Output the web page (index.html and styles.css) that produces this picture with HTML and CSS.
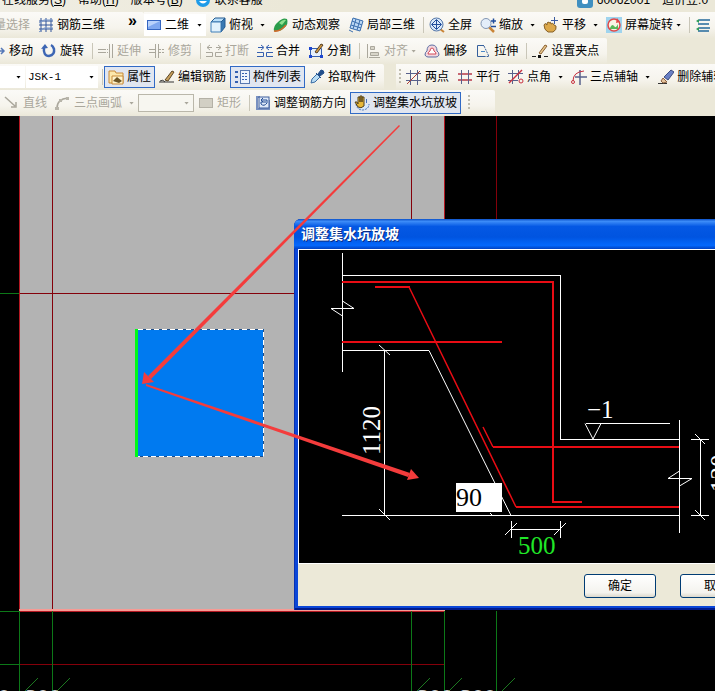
FILE: index.html
```
<!DOCTYPE html>
<html lang="zh-CN">
<head>
  <meta charset="UTF-8">
  <meta name="viewport" content="width=device-width, initial-scale=1.0">
  <title>调整集水坑放坡</title>
  <link rel="stylesheet" href="styles.css">
</head>
<body>

  <!-- Menu -->
  <nav class="menu">
    <a href="#">在线服务(<u>S</u>)</a>
    <a href="#">帮助(<u>H</u>)</a>
    <a href="#">版本号(<u>B</u>)</a>
    <a href="#" class="contact">
      <svg class="icon" viewBox="0 0 16 16"><circle cx="8" cy="8" r="7" fill="#1e9be8"/><path d="M4 9q4 5 8 0" fill="#fff"/></svg>
      联系客服
    </a>
    <a href="#" class="account">
      <svg class="icon" viewBox="0 0 16 16"><rect width="16" height="16" rx="3" fill="#3f8fc0"/><rect x="5" y="7" width="6" height="5" rx="2" fill="#fff"/></svg>
      60062001
    </a>
    <a href="#" class="coins">造价豆:0</a>
  </nav>

  <!-- View toolbar -->
  <div class="row">
    <div class="bar bar-select">
      <button class="tool off"><svg class="icon" viewBox="0 0 16 16"></svg>批量选择</button>
      <button class="tool"><svg class="icon" viewBox="0 0 16 16"><path d="M1 4h14M1 8h14M1 12h14M3 1v14M8 1v14M13 1v14" stroke="#31549a" fill="none"/><path d="M1 6l5-3h9M1 15l5-4h9" stroke="#7494c8" fill="none"/></svg>钢筋三维</button>
      <button class="more" aria-label="更多">»</button>
    </div>
    <div class="bar">
      <label class="combo combo-view">
        <svg class="icon" viewBox="0 0 16 16"><rect x="1.500" y="3.500" width="13" height="9" fill="#7fa8f0" stroke="#3465c0"/><path d="M2 4h12l-12 6z" fill="#b9d2fb"/></svg>
        <select aria-label="视图"><option>二维</option></select><i class="arrow"></i>
      </label>
      <button class="tool"><svg class="icon" viewBox="0 0 16 16"><path d="M1 5l4-4h10l-4 4z" fill="#b8defa" stroke="#245b90"/><path d="M11 5l4-4v9l-4 5z" fill="#3979b3" stroke="#245b90"/><path d="M1 5h10v10H1z" fill="#e1f1fc" stroke="#3f7fb8"/></svg>俯视<i class="arrow"></i></button>
      <button class="tool"><svg class="icon" viewBox="0 0 16 16"><path d="M1 14q-1-5 4-9 5-5 9-3 2 5-3 9-4 4-10 3z" fill="#2a9c4a"/><path d="M6 6q4-4 7-3l-4 5z" fill="#8fe08f"/><path d="M1 14q6 1 12-6" stroke="#d26a2c" fill="none" stroke-width="1.500"/></svg>动态观察</button>
      <button class="tool"><svg class="icon" viewBox="0 0 16 16"><path d="M5 1l10 3-3 10-10-3z" fill="#bcd8f4" stroke="#3c6fae"/><path d="M8 2L5 12M12 3L9 13M4 4l10 4M3 8l10 3M1 13l4 2" stroke="#3c6fae" fill="none"/></svg>局部三维</button>
      <span class="sep"></span>
      <button class="tool"><svg class="icon" viewBox="0 0 16 16"><path d="M11 12l4 3" stroke="#c98436" stroke-width="2"/><circle cx="7.500" cy="7.500" r="6.500" fill="#d8e8fa" stroke="#5577a8"/><path d="M3 7.500h9M7.500 3v9M5 5l2.500-2.500L10 5M5 10l2.500 2.500L10 10M5 5L2.500 7.500 5 10M10 5l2.500 2.500L10 10" stroke="#204d9c" fill="none"/></svg>全屏</button>
      <button class="tool"><svg class="icon" viewBox="0 0 16 16"><path d="M9 10l5 5" stroke="#c98436" stroke-width="2.500"/><circle cx="6" cy="6.500" r="5" fill="#e4eefa" stroke="#8296b4"/><path d="M11 4h5M13.500 1.500v5M11 9.500h5" stroke="#204d9c" stroke-width="1.500"/></svg>缩放<i class="arrow"></i></button>
      <button class="tool"><svg class="icon" viewBox="0 0 16 16"><path d="M1 8q1-3 3 0V6q2-2 2 0 2-2 2 1 2-2 3 1l2 1q1 4-3 6H5q-4-2-4-7z" fill="#dca84a" stroke="#87622a"/><path d="M8 3.500h7M11.500 0v7" stroke="#3b5ba0"/></svg>平移<i class="arrow"></i></button>
      <button class="tool"><svg class="icon" viewBox="0 0 16 16"><rect width="16" height="16" fill="#9fd4ee"/><circle cx="8" cy="8" r="6" fill="#f8f4e4" stroke="#e04848" stroke-width="1.500"/><path d="M4 11q2-5 4-2t4-2v5H4z" fill="#58b858"/><path d="M11 1l3 4-4 1z" fill="#e04848"/></svg>屏幕旋转<i class="arrow tight"></i></button>
      <span class="sep"></span>
      <button class="tool"><svg class="icon" viewBox="0 0 16 16"><path d="M4 3h11M3 7h11M4 11h11M3 14h11" stroke="#256a9c" stroke-width="1.500"/><path d="M1 4l3-2v4zM1 12l3-2v4z" fill="#2e9c58"/></svg></button>
    </div>
  </div>

  <!-- Edit toolbar -->
  <div class="row">
    <div class="bar bar-edit">
      <button class="tool"><svg class="icon" viewBox="0 0 16 16"><path d="M3 8h11M11 5l3 3-3 3" stroke="#5578b8" stroke-width="1.500" fill="none"/></svg>移动</button>
      <button class="tool"><svg class="icon" viewBox="0 0 16 16"><path d="M3 4q-1 9 5 9 6-1 5-7-1-3-3-4" stroke="#3d66b4" stroke-width="2.500" fill="none"/><path d="M0 6l4-5 3 4z" fill="#3d66b4"/></svg>旋转</button>
      <span class="sep"></span>
      <button class="tool off"><svg class="icon" viewBox="0 0 16 16"><path d="M0 6.500h7M0 9.500h7M11.500 1v14M14.500 1v14" stroke="#aaa79c"/><path d="M7 6.500h4M7 9.500h4" stroke="#aaa79c" stroke-dasharray="1 1"/></svg>延伸</button>
      <button class="tool off"><svg class="icon" viewBox="0 0 16 16"><path d="M0 6.500h6M0 9.500h6M6.500 1v14M9.500 1v14" stroke="#aaa79c"/><path d="M10 6.500h6M10 9.500h6" stroke="#aaa79c" stroke-dasharray="2 1"/></svg>修剪</button>
      <span class="sep"></span>
      <button class="tool off"><svg class="icon" viewBox="0 0 16 16"><path d="M1 4.500h5M4 2L1 4.500 4 7M10 4.500h5M12 2l3 2.500L12 7M0 9.500h6.500v4H0M16 9.500H9.500v4H16" stroke="#aaa79c" fill="none"/></svg>打断</button>
      <button class="tool"><svg class="icon" viewBox="0 0 16 16"><path d="M1 4.500h5M4 2l3 2.500L4 7M15 4.500h-5M12 2L9 4.500 12 7M0 9.500h6.500v4H0M16 9.500H9.500v4H16" stroke="#345fb0" fill="none"/></svg>合并</button>
      <button class="tool"><svg class="icon" viewBox="0 0 16 16"><path d="M2.500 5.500h11v8h-11z" fill="#e6effb" stroke="#345fb0"/><path d="M1 4h3v3H1zM1 12h3v3H1zM12 12h3v3h-3z" fill="#1d46d0"/><path d="M7 9l6-8 2 1-6 8z" fill="#d69b40" stroke="#503c24"/></svg>分割</button>
      <span class="sep"></span>
      <button class="tool off"><svg class="icon" viewBox="0 0 16 16"><path d="M2.500 1v14M4 14.500h11" stroke="#aaa79c"/><path d="M5.500 3.500h4v3h-4zM5.500 9.500h8v3h-8z" fill="#d8d5c9" stroke="#aaa79c"/></svg>对齐<i class="arrow tight"></i></button>
      <button class="tool"><svg class="icon" viewBox="0 0 16 16"><path d="M1 12q0-3 2-4 0-6 5-6t5 6q2 1 2 4-1 2-3 2H4q-2 0-3-2z" fill="#f3d6dc" stroke="#5c6fa4"/><path d="M4 11q0-2 2-3 0-3 2-3t2 3q2 1 2 3z" fill="#fff" stroke="#d24858"/></svg>偏移</button>
      <button class="tool"><svg class="icon" viewBox="0 0 16 16"><path d="M9 2.500H2.500v11H9" stroke="#345f9c" fill="none"/><path d="M9 3l5 10.500H8" stroke="#345f9c" stroke-dasharray="2 1" fill="none"/><path d="M6 8.500h4" stroke="#4a88c8"/></svg>拉伸</button>
      <span class="sep"></span>
      <button class="tool"><svg class="icon" viewBox="0 0 16 16"><path d="M0 13.500h4M12 13.500h4" stroke="#222"/><path d="M6 12h3v3H6z" fill="#111"/><path d="M7 10l6-8 2 1-6 8z" fill="#e8c68c" stroke="#8a6030"/></svg>设置夹点</button>
    </div>
  </div>

  <!-- Component toolbar -->
  <div class="row">
    <div class="bar">
      <label class="combo combo-type"><select aria-label="构件类型"><option></option></select><i class="arrow"></i></label>
      <label class="combo combo-name"><select aria-label="构件"><option>JSK-1</option></select><i class="arrow"></i></label>
      <span class="sep"></span>
      <button class="tool on"><svg class="icon" viewBox="0 0 16 16"><path d="M1 2h6l1 2h7v10H1z" fill="#fce8ac" stroke="#c88a38"/><path d="M4 7h11v8H4z" fill="#fff4cc" stroke="#c88a38"/><path d="M5 12l4-4 5 4-3 2z" fill="#6c5424"/></svg>属性</button>
      <button class="tool"><svg class="icon" viewBox="0 0 16 16"><path d="M0 13h15M1 12q3-2 5 1" stroke="#333" fill="none"/><path d="M6 11l7-9 2 1-6 9z" fill="#c8a05c" stroke="#5c4828"/></svg>编辑钢筋</button>
      <button class="tool on"><svg class="icon" viewBox="0 0 16 16"><path d="M1 3h3M1 8h3M1 13h3" stroke="#345fb0" stroke-width="2"/><rect x="6.500" y="1.500" width="9" height="13" fill="#edf3fc" stroke="#5878b0"/><path d="M8 4.500h6M8 7.500h6M8 10.500h6" stroke="#345fb0" stroke-dasharray="2 1"/></svg>构件列表</button>
      <button class="tool"><svg class="icon" viewBox="0 0 16 16"><path d="M2 14l1-4 5-5 3 3-5 5z" fill="#b8dcf4" stroke="#3a6ca4"/><path d="M7 4l5 5M9 5l3-4q3 0 3 3l-4 3z" fill="#234f8c" stroke="#234f8c"/></svg>拾取构件</button>
    </div>
    <div class="bar bar-axis">
      <span class="grip"></span>
      <button class="tool"><svg class="icon" viewBox="0 0 16 16"><path d="M0 4.500h15M0 11.500h15M4.500 1v15M11.500 1v15" stroke="#58618c"/><path d="M1 15L14 2" stroke="#b04038"/></svg>两点</button>
      <button class="tool"><svg class="icon" viewBox="0 0 16 16"><path d="M1 5h14M1 11h14" stroke="#b83848" stroke-width="1.500"/><path d="M4.500 1v14M11.500 1v14" stroke="#58618c"/></svg>平行</button>
      <button class="tool"><svg class="icon" viewBox="0 0 16 16"><path d="M0 4.500h15M0 11.500h10M4.500 1v14M10.500 1v9" stroke="#58618c"/><path d="M1 14L14 1" stroke="#c83040" stroke-width="1.500"/><circle cx="13" cy="12" r="2" fill="none" stroke="#c83040"/></svg>点角<i class="arrow"></i></button>
      <button class="tool"><svg class="icon" viewBox="0 0 16 16"><path d="M4 8h12M9 1v15" stroke="#58618c" stroke-width="1.500"/><path d="M2 12q0-9 11-10" stroke="#c83040" fill="none"/><circle cx="2" cy="13" r="1.500" fill="none" stroke="#c83040"/></svg>三点辅轴<i class="arrow"></i></button>
      <button class="tool"><svg class="icon" viewBox="0 0 16 16"><path d="M0 14.500h9" stroke="#333"/><path d="M5 9l4 4-4 1-2-2z" fill="#e5c49c" stroke="#8c6040"/><path d="M6 8l7-7 3 2-6 8z" fill="#6a80c4" stroke="#3c4c80"/></svg>删除辅轴</button>
    </div>
  </div>

  <!-- Draw toolbar -->
  <div class="row">
    <div class="bar">
      <button class="tool off"><svg class="icon" viewBox="0 0 16 16"><path d="M1 2l10 9M12 7v5H7" stroke="#aaa79c" stroke-width="1.500" fill="none"/></svg>直线</button>
      <button class="tool off"><svg class="icon" viewBox="0 0 16 16"><path d="M2 13q0-9 11-10" stroke="#aaa79c" stroke-width="1.500" fill="none"/><path d="M0 12h4v3H0zM4 4h3v3H4zM11 2h3v3h-3z" fill="#b8b5aa"/></svg>三点画弧<i class="arrow"></i></button>
      <label class="combo combo-arc"><select aria-label="画弧方式" disabled><option></option></select><i class="arrow"></i></label>
      <button class="tool off"><svg class="icon" viewBox="0 0 16 16"><rect x="1.500" y="3.500" width="13" height="9" fill="#d2cfc4" stroke="#b4b1a6"/></svg>矩形</button>
      <span class="sep"></span>
      <button class="tool"><svg class="icon" viewBox="0 0 16 16"><path d="M1 1h4v2H3v10h10V5h2v10H1z" fill="#7890c0"/><rect x="4" y="2" width="10" height="11" fill="#dfe9f8" stroke="#3c5c9c"/><path d="M6 5h6v3q-3 4-6 1V7h5M8 3L6 5l2 2" stroke="#234c94" fill="none"/></svg>调整钢筋方向</button>
      <button class="tool on"><svg class="icon" viewBox="0 0 16 16"><path d="M2 9q1 6 7 6 6-1 6-6" fill="#d8e8fa" stroke="#4470b8" stroke-dasharray="2 1"/><path d="M1 7h2l1 2V2h2v5-6h2v6-5h2v9q-3 3-6 1z" fill="#e8b838" stroke="#54421c"/><path d="M12.500 4v4" stroke="#4470b8"/></svg>调整集水坑放坡</button>
    </div>
    <div class="bar bar-empty"><span class="grip"></span></div>
  </div>

  <!-- Drawing area -->
  <main class="canvas">
    <svg class="plan" width="1200" height="1000" viewBox="0 116 1200 1000">
      <rect x="19" y="116" width="426" height="494" fill="#b3b3b3"/>
      <g shape-rendering="crispEdges" fill="none">
        <path d="M52.500 116V610M411.500 116V610M496.500 116V610M19 293.500H445M19 664.500H445" stroke="#84000a"/>
        <path d="M19.500 116V610M444.500 116V610" stroke="#b41822"/>
        <path d="M19 610H445" stroke="#f89a94" stroke-width="2"/>
        <path d="M19 611.500H445" stroke="#b41822"/>
        <path d="M0 293.500H19M0 611.500H19M0 664.500H19M19.500 611V1100M52.500 611V1100M411.500 611V1100M444.500 611V1100M496.500 611V1100" stroke="#0c7818"/>
      </g>
      <path d="M24 692L38 678M56 692L70 678M416 692L430 678M448 692L462 678M501 692L515 678" stroke="#1c7820"/>
      <g class="axis-text">
        <text x="-2" y="705">0</text>
        <text x="25" y="705">300</text>
        <text x="417" y="705">300</text>
        <text x="460" y="705">300</text>
      </g>
      <!-- Selected pit -->
      <rect x="136" y="329" width="128" height="128" fill="#007af0"/>
      <path d="M138 329.500H263.500V456.500H138" fill="none" stroke="#1c4c88"/>
      <path d="M138 329.500H263.500V456.500H138" fill="none" stroke="#fff" stroke-dasharray="5 3"/>
      <rect x="135" y="329" width="3" height="128" fill="#00f818"/>
    </svg>

    <!-- Slope dialog -->
    <form class="dialog">
      <h2 class="dialog-title">调整集水坑放坡</h2>
      <div class="section">
        <svg class="section-svg" width="471" height="313" viewBox="299 250 471 313">
          <g fill="none" stroke="#fff" shape-rendering="crispEdges">
            <path d="M342.500 253V372M342 275.500H560.500V439.500H679M342 350.500H429M342 515.500H679M384.500 350V515M679.500 420V533M586 423.500H670M691 439.500H709M691 515.500H709M700.500 439V515M511.500 521V538M560.500 521V538M511 529.500H560"/>
          </g>
          <g fill="none" stroke="#fff">
            <path d="M429 350.500L511 515.500M342.500 301L354 308.500H331L342.500 316M679.500 471L668 478.500H692L679.500 486M379 345L390 355M379 509L390 520M585 423.500L593 439L601 423.500M695 434L705 444M695 510L705 520M505 535L517 523M554 535L566 523M490 513l2 2"/>
          </g>
          <g fill="none" stroke="#e80c14" stroke-width="2" shape-rendering="crispEdges">
            <path d="M342 282H553V502M342 342H502"/>
            <path d="M375 287H410M493 447H679M516 507H679M552 502H582"/>
          </g>
          <path d="M409 287L516 507M483 427L493 447" fill="none" stroke="#e80c14" stroke-width="1.500"/>
          <g class="dim-text">
            <text transform="translate(380 455) rotate(-90)">1120</text>
            <text x="587" y="418">−1</text>
            <text class="dim-edit" x="518" y="554">500</text>
            <text transform="translate(728 492) rotate(-90)">120</text>
          </g>
        </svg>
        <input class="angle" type="text" value="90" aria-label="放坡角度">
      </div>
      <div class="dialog-buttons">
        <button type="button">确定</button>
        <button type="button">取消</button>
      </div>
    </form>

    <!-- Pointer arrows over the plan and the dialog -->
    <svg class="pointers" width="1200" height="1000" viewBox="0 116 1200 1000">
      <g fill="#f43c3c">
        <path d="M399 125L400 126L151 379L148 376Z"/>
        <path d="M142 384L144 372L154 382Z"/>
        <path d="M146 384L146 386L408 477L410 473Z"/>
        <path d="M419 478L407 480L411 469Z"/>
      </g>
    </svg>
  </main>

</body>
</html>
```
FILE: styles.css
```
* {
  box-sizing: border-box;
}
body {
  display: flex;
  flex-direction: column;
  height: 100vh;
  margin: 0;
  overflow: hidden;
  background: #ebe8d8;
  color: #000;
  font: 12px/16px "Liberation Sans", "Noto Sans CJK SC", sans-serif;
}
button, select, input {
  margin: 0;
  padding: 0;
  border: none;
  background: none;
  color: inherit;
  font: inherit;
}
.icon {
  flex: none;
  width: 16px;
  height: 16px;
}

/* Menu */
.menu {
  display: flex;
  flex: none;
  align-items: flex-end;
  gap: 12px;
  height: 12px;
  padding: 0 0 4px 2px;
  overflow: hidden;
  background: linear-gradient(90deg, #f0eee4, #ebe8d8 40%);
  white-space: nowrap;
}
.menu a {
  display: flex;
  flex: none;
  color: #000;
  text-decoration: none;
}
.contact {
  gap: 4px;
}
.account {
  gap: 4px;
  margin-left: 302px;
}

/* Toolbars */
.row {
  display: flex;
  flex: none;
  height: 26px;
  overflow: hidden;
  white-space: nowrap;
}
.bar {
  display: flex;
  flex: none;
  align-items: center;
  padding-right: 4px;
  border-radius: 0 2px 2px 0;
  background: linear-gradient(#fbfaf7, #f6f4ed 60%, #ebe8d9);
}
.bar-select {
  width: 144px;
  padding: 0;
}
.bar-select .tool:first-child {
  margin-left: -41px;
}
.bar-edit .tool:first-child {
  margin-left: -14px;
}
.bar-axis {
  margin-left: 12px;
}
.bar-empty {
  width: 30px;
}
.tool {
  display: flex;
  flex: none;
  align-items: center;
  gap: 3px;
  height: 22px;
  padding: 0 4px;
}
.tool.off {
  color: #aaa79c;
}
.tool.on {
  padding: 0 3px;
  border: 1px solid #316ac5;
  background: #e1e6f0;
}
.arrow {
  flex: none;
  width: 5px;
  height: 3px;
  margin-left: 4px;
  background: currentColor;
  clip-path: polygon(0 0, 100% 0, 50% 100%);
}
.arrow.tight {
  margin-left: 0;
}
.more {
  margin: 0 0 8px 19px;
  font-size: 16px;
  font-weight: bold;
}
.sep {
  flex: none;
  width: 1px;
  height: 16px;
  margin: 0 1px 0 4px;
  background: #c9c6b8;
}
.grip {
  flex: none;
  width: 2px;
  height: 16px;
  margin: 0 1px 0 3px;
  background: repeating-linear-gradient(#bfbcae 0 2px, transparent 2px 4px);
}
.combo {
  display: flex;
  flex: none;
  align-items: center;
  height: 22px;
  padding-right: 4px;
  background: #fff;
}
.combo select {
  flex: 1;
  min-width: 0;
  appearance: none;
}
.combo-view {
  width: 62px;
  gap: 3px;
  padding-left: 2px;
}
.combo-view .arrow {
  margin: 0;
}
.combo-type {
  width: 25px;
}
.combo-name {
  width: 72px;
  margin-left: 1px;
  padding-left: 2px;
  font-family: "Liberation Mono", monospace;
  font-size: 11px;
}
.combo-arc {
  width: 56px;
  height: 18px;
  border: 1px solid #bab7aa;
  background: #f7f6f0;
  color: #aaa79c;
}

/* Drawing area */
.canvas {
  position: relative;
  flex: 1;
  min-height: 0;
  overflow: hidden;
  background: #000;
}
.plan {
  display: block;
}
.axis-text {
  fill: #c8c8c8;
  font: 24px "Liberation Serif", serif;
}
.pointers {
  position: absolute;
  top: 0;
  left: 0;
  pointer-events: none;
}

/* Dialog window */
.dialog {
  position: absolute;
  top: 103px;
  left: 294px;
  padding: 0 4px 4px;
  border-radius: 7px 7px 0 0;
  background: #0a46d8;
  box-shadow: inset 1px 0 #0831b0, inset 0 -2px #001a8c;
}
.dialog-title {
  height: 30px;
  margin: 0 -4px;
  padding-left: 7px;
  border-radius: 7px 7px 0 0;
  background: linear-gradient(#0a50c8, #3c8cf8 8%, #0458e4 25%, #0054e0 60%, #0468fc 88%, #0040c0);
  color: #fff;
  font-size: 14px;
  font-weight: bold;
  line-height: 31px;
  text-shadow: 1px 1px #0a2c80;
}
.section {
  position: relative;
  border: 1px solid #fff;
  background: #000;
}
.section-svg {
  display: block;
}
.dim-text {
  fill: #fff;
  font: 25px "Liberation Serif", serif;
}
.dim-edit {
  fill: #20e828;
}
.angle {
  position: absolute;
  top: 233px;
  left: 157px;
  width: 46px;
  height: 29px;
  background: #fff;
  color: #000;
  font: 26px "Liberation Serif", serif;
}
.dialog-buttons {
  display: flex;
  justify-content: flex-end;
  gap: 24px;
  padding: 10px 19px 8px;
  background: #ece9d8;
}
.dialog-buttons button {
  width: 72px;
  height: 24px;
  border: 1px solid #003c74;
  border-radius: 3px;
  background: linear-gradient(#fff, #f4f3ee 80%, #dcd8cc);
}
```
